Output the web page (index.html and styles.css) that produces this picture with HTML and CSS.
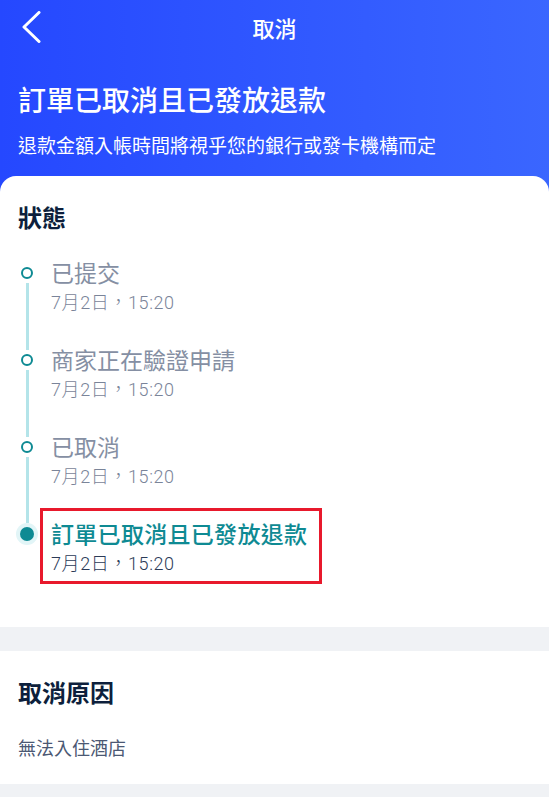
FILE: index.html
```html
<!DOCTYPE html>
<html lang="zh-Hant">
<head>
<meta charset="utf-8">
<title>取消</title>
<link rel="stylesheet" href="styles.css">
</head>
<body>
<div class="page">
  <header class="hero">
    <div class="nav">
      <span class="back">
        <svg width="20" height="32" viewBox="0 0 20 32"><polyline points="18,1.5 3,16 18,30.5" fill="none" stroke="#fff" stroke-width="3" stroke-linecap="round" stroke-linejoin="round"/></svg>
      </span>
      <div class="nav-title">取消</div>
      <span class="nav-spacer"></span>
    </div>
    <h1 class="hero-title">訂單已取消且已發放退款</h1>
    <p class="hero-sub">退款金額入帳時間將視乎您的銀行或發卡機構而定</p>
  </header>

  <section class="card status-card">
    <h2 class="section-title">狀態</h2>
    <ol class="timeline">
      <li class="step first">
        <div class="rail"><span class="seg top"></span><span class="dot"></span><span class="seg bottom"></span></div>
        <div class="step-body">
          <div class="step-title">已提交</div>
          <div class="step-date">7月2日，15:20</div>
        </div>
      </li>
      <li class="step">
        <div class="rail"><span class="seg top"></span><span class="dot"></span><span class="seg bottom"></span></div>
        <div class="step-body">
          <div class="step-title">商家正在驗證申請</div>
          <div class="step-date">7月2日，15:20</div>
        </div>
      </li>
      <li class="step">
        <div class="rail"><span class="seg top"></span><span class="dot"></span><span class="seg bottom"></span></div>
        <div class="step-body">
          <div class="step-title">已取消</div>
          <div class="step-date">7月2日，15:20</div>
        </div>
      </li>
      <li class="step current">
        <div class="rail"><span class="seg top"></span><span class="dot"></span></div>
        <div class="step-body highlight">
          <div class="step-title">訂單已取消且已發放退款</div>
          <div class="step-date">7月2日，15:20</div>
        </div>
      </li>
    </ol>
  </section>

  <section class="card reason-card">
    <h2 class="section-title">取消原因</h2>
    <p class="reason">無法入住酒店</p>
  </section>
</div>
</body>
</html>
```

FILE: styles.css
```css
* { box-sizing: border-box; }

html, body {
  margin: 0;
  padding: 0;
}

body {
  background: #f0f2f5;
  font-family: "Noto Sans CJK TC", sans-serif;
  color: #0d1f3c;
}

.page {
  width: 549px;
  min-height: 797px;
}

.hero {
  background: linear-gradient(90deg, #2548ff 0%, #3a66ff 100%);
  color: #fff;
  padding: 0 18px 33px 18px;
}

.nav {
  height: 54px;
  display: flex;
  align-items: center;
  justify-content: space-between;
}

.back {
  width: 40px;
  display: flex;
  align-items: center;
  padding-left: 3px;
  height: 32px;
}

.back svg { display: block; }

.nav-title {
  font-size: 22px;
  line-height: 54px;
  font-weight: 500;
}

.nav-spacer { width: 40px; }

.hero-title {
  margin: 25px 0 0 0;
  font-size: 28px;
  line-height: 40px;
  font-weight: 500;
}

.hero-sub {
  margin: 12px 0 0 0;
  font-size: 19px;
  line-height: 28px;
  font-weight: 400;
}

.card {
  background: #fff;
}

.status-card {
  margin-top: -16px;
  border-radius: 16px 16px 0 0;
  padding: 25px 18px 51px 18px;
}

.section-title {
  margin: 0;
  font-size: 24px;
  line-height: 32px;
  font-weight: 700;
  color: #0d1f3c;
}

.timeline {
  list-style: none;
  margin: 24px 0 0 0;
  padding: 0;
}

.step {
  display: flex;
  align-items: stretch;
}

.rail {
  width: 18px;
  flex: none;
  display: flex;
  flex-direction: column;
  align-items: center;
}

.seg {
  width: 3px;
  background: #b4e4e9;
}

.seg.top { height: 6px; margin-bottom: 4px; }
.seg.bottom { flex: 1; margin-top: 4px; }
.step.first .seg.top { visibility: hidden; }

.dot {
  width: 12px;
  height: 12px;
  border-radius: 50%;
  border: 2px solid #0e8a93;
  background: #fff;
  flex: none;
}

.step.current .seg.top { height: 5px; margin-bottom: 0; }

.step.current .dot {
  width: 14px;
  height: 14px;
  border: none;
  background: #0e8a93;
  box-shadow: 0 0 0 4px #e2f5f7;
  margin-top: 4px;
}

.step-body {
  margin-left: 15px;
  padding-bottom: 29px;
}

.step-title {
  font-size: 23px;
  line-height: 30px;
  color: #858fa3;
}

.step-date {
  margin-top: 4px;
  font-family: "Roboto", "Noto Sans CJK TC", sans-serif;
  font-size: 18px;
  line-height: 24px;
  font-weight: 300;
  letter-spacing: 0.6px;
  color: #7a8499;
}

.step.current .step-body {
  padding-bottom: 0;
}

.highlight {
  position: relative;
}

.highlight::after {
  content: "";
  position: absolute;
  left: -11px;
  top: -10px;
  right: -15px;
  bottom: -8px;
  border: 3px solid #e8192c;
  pointer-events: none;
}

.step.current .step-title {
  color: #0e8a93;
  font-weight: 500;
  letter-spacing: 0.3px;
}

.step.current .step-date {
  color: #2b3a57;
}

.reason-card {
  margin-top: 24px;
  padding: 25px 18px 24px 18px;
}

.reason {
  margin: 26px 0 0 0;
  font-size: 18px;
  line-height: 26px;
  color: #4b5873;
}
```
